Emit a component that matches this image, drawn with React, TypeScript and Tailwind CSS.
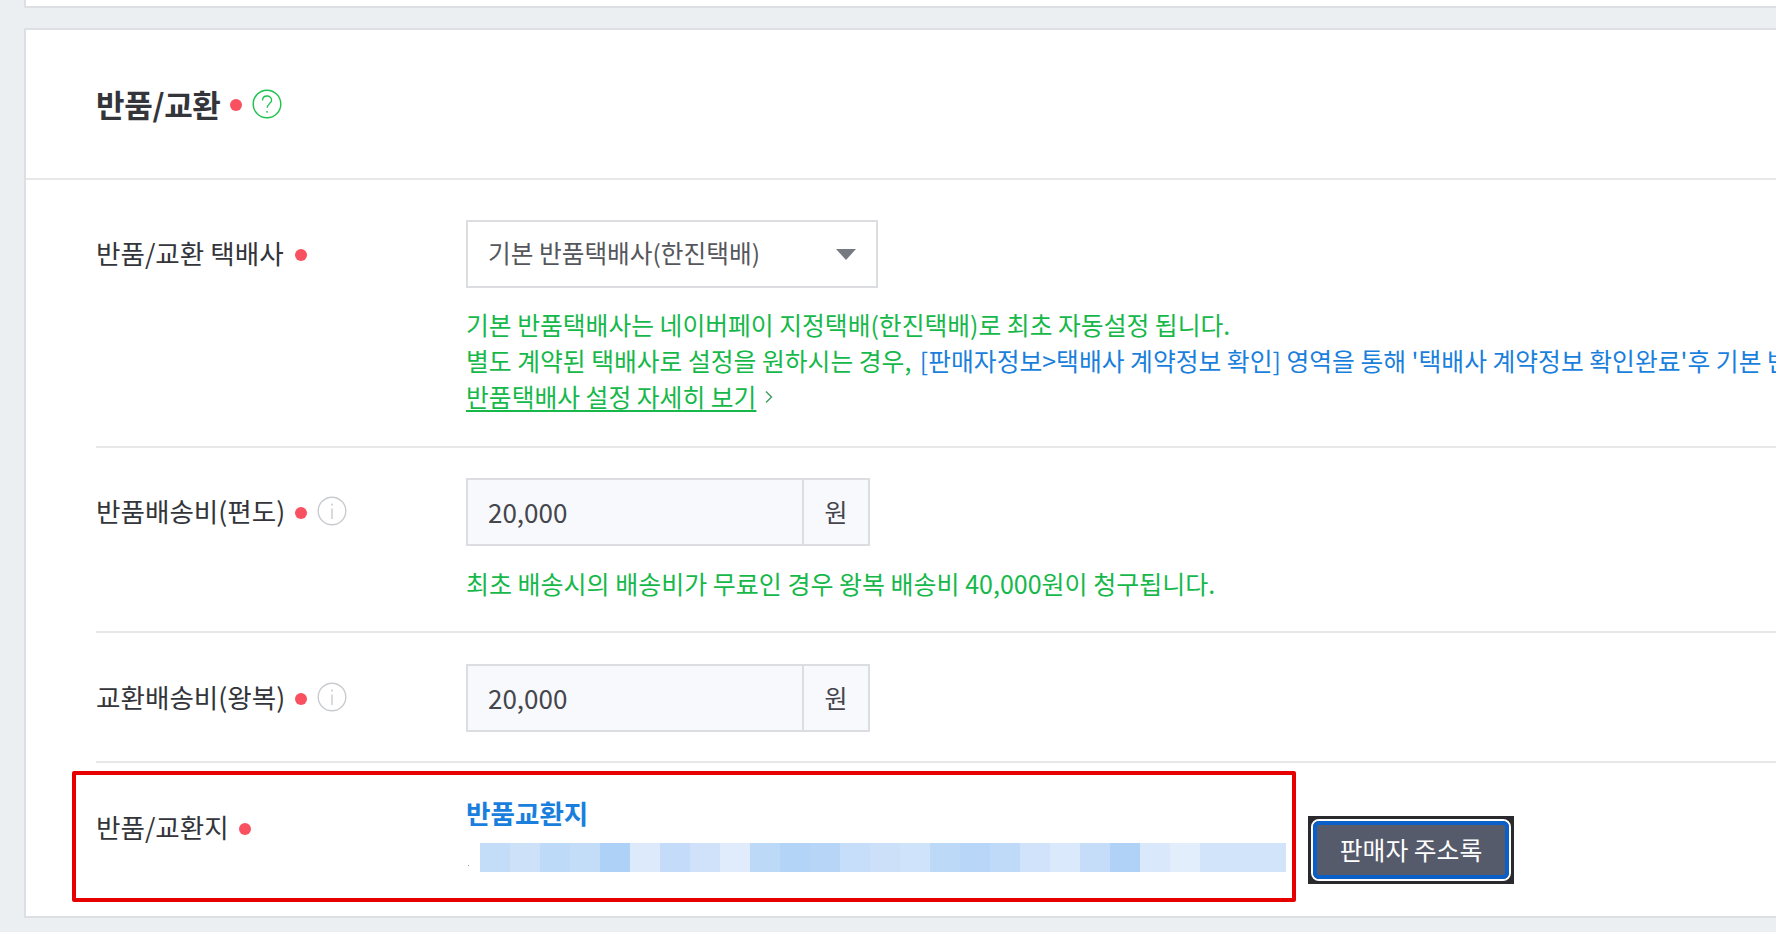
const blocks = [
  ['#c3dcf8', 30], ['#cde1f9', 30], ['#bddaf8', 30], ['#c3dcf8', 30], ['#aed1f7', 30], ['#dceafc', 30], ['#c4dcf9', 30], ['#d0e2fa', 30], ['#e0ecfc', 30],
  ['#bcd9f8', 30], ['#b4d4f7', 30], ['#b6d5f7', 30], ['#c6def9', 30], ['#cce0f9', 30], ['#cfe4fb', 30], ['#bcd9f8', 30], ['#b7d6f8', 30], ['#bfdaf8', 30],
  ['#d1e3fa', 30], ['#dbe9fc', 30], ['#c5ddf8', 30], ['#b0d2f7', 30], ['#dae8fb', 30], ['#e3eefc', 30], ['#d2e4fa', 86],
];

function Dot() {
  return <span className="inline-block w-[12px] h-[12px] mt-[4px] rounded-full bg-[#f9515f] shrink-0" />;
}

function Info() {
  return (
    <svg width="30" height="30" viewBox="0 0 30 30" fill="none" className="shrink-0">
      <circle cx="15" cy="15" r="13.8" stroke="#c9cbce" strokeWidth="1.4" />
      <path d="M15 12.5V23" stroke="#c9cbce" strokeWidth="1.4" />
      <circle cx="15" cy="8.5" r="1" fill="#c9cbce" />
    </svg>
  );
}

function Help() {
  return (
    <svg width="30" height="30" viewBox="0 0 30 30" fill="none" className="shrink-0">
      <circle cx="15" cy="15" r="13.8" stroke="#1ec14e" strokeWidth="1.4" />
      <path d="M10.5 11.5C10.5 8.8 12.5 7 15.1 7C17.7 7 19.6 8.8 19.6 11.2C19.6 14.4 15.2 15 15.2 18.8" stroke="#1ec14e" strokeWidth="1.3" />
      <circle cx="15" cy="22.8" r="0.9" fill="#1ec14e" />
    </svg>
  );
}

function PriceInput() {
  return (
    <div className="flex w-[404px] h-[68px] border-2 border-[#dcdde0] bg-[#f8f9fc] text-[#44464c]">
      <div className="flex-1 flex items-center pl-[20px] pb-[2px] text-[26px]">20,000</div>
      <div className="w-[66px] flex items-center justify-center border-l-2 border-[#dcdde0] text-[25px]">원</div>
    </div>
  );
}

export default function App() {
  return (
    <div className="relative h-[932px] overflow-hidden bg-[#ebeff2] pl-[24px] font-['Noto_Sans_CJK_KR','Noto_Sans',sans-serif] text-[#33353a]">
      <div className="h-[8px] bg-white border-l-2 border-b-2 border-[#dcdfe3]" />
      <div className="mt-[20px] h-[890px] w-[1752px] bg-white border-l-2 border-t-2 border-b-2 border-[#dcdfe3]">
        <div className="h-[150px] flex items-center pl-[70px] border-b-2 border-[#e6e7e9]">
          <h2 className="text-[31px] font-bold tracking-[-0.3px]">반품/교환</h2>
          <span className="ml-[9px] inline-block w-[12px] h-[12px] mt-[2px] rounded-full bg-[#f9515f] shrink-0" />
          <span className="ml-[10px]"><Help /></span>
        </div>
        <div className="ml-[70px]">
          <div className="h-[268px] flex border-b-2 border-[#e6e7e9] pt-[40px]">
            <div className="w-[370px] h-[68px] pb-[2px] flex items-center gap-[11px] text-[26.6px]">
              반품/교환 택배사 <Dot />
            </div>
            <div className="flex-1 min-w-0">
              <div className="w-[412px] h-[68px] flex items-center justify-between pl-[20px] pr-[20px] border-2 border-[#dcdde0] text-[24.7px] text-[#55575c]">
                <span className="mb-[2px]">기본 반품택배사(한진택배)</span>
                <span className="w-0 h-0 border-x-[10px] border-x-transparent border-t-[11px] border-t-[#777980]" />
              </div>
              <div className="mt-[18px] text-[24.8px] leading-[36px] text-[#16b84a] whitespace-nowrap">
                <p>기본 반품택배사는 네이버페이 지정택배(한진택배)로 최초 자동설정 됩니다.</p>
                <p>별도 계약된 택배사로 설정을 원하시는 경우, <span className="ml-[3px] text-[#1a7fdc]">[판매자정보&gt;택배사 계약정보 확인] 영역을 통해 '택배사 계약정보 확인완료'후 기본 반품택배사로 설정이 가능합니다.</span></p>
                <p className="flex items-center">
                  <a className="underline decoration-2 underline-offset-[3px]">반품택배사 설정 자세히 보기</a>
                  <svg width="8" height="14" viewBox="0 0 8 14" fill="none" className="ml-[9px] mt-[2px]">
                    <path d="M1 1.5L6.5 7L1 12.5" stroke="#3f9a62" strokeWidth="1.4" />
                  </svg>
                </p>
              </div>
            </div>
          </div>
          <div className="h-[185px] flex border-b-2 border-[#e6e7e9] pt-[30px]">
            <div className="w-[370px] h-[68px] pb-[2px] flex items-center gap-[10px] text-[26.6px]">
              반품배송비(편도) <Dot /> <Info />
            </div>
            <div>
              <PriceInput />
              <p className="mt-[19px] text-[25px] leading-[36px] text-[#16b84a] whitespace-nowrap">최초 배송시의 배송비가 무료인 경우 왕복 배송비 40,000원이 청구됩니다.</p>
            </div>
          </div>
          <div className="h-[130px] flex border-b-2 border-[#e6e7e9] pt-[31px]">
            <div className="w-[370px] h-[68px] pb-[2px] flex items-center gap-[10px] text-[26.6px]">
              교환배송비(왕복) <Dot /> <Info />
            </div>
            <PriceInput />
          </div>
          <div className="h-[153px] flex items-start">
            <div className="w-[370px] h-[36px] mt-[46px] flex items-center gap-[10px] text-[26.6px]">
              반품/교환지 <Dot />
            </div>
            <div className="w-[820px] mt-[32px]">
              <p className="text-[26.6px] leading-[36px] font-bold text-[#1a7fdc]">반품교환지</p>
              <div className="mt-[12px] flex items-end h-[29px]">
                <span className="w-[1px] h-[1px] ml-[2px] mb-[6px] bg-[#9a9a9a] mr-[11px]" />
                <div className="flex h-full">
                  {blocks.map(([color, width], i) => (
                    <div key={i} style={{ backgroundColor: color as string, width: width as number }} />
                  ))}
                </div>
              </div>
            </div>
            <button className="ml-[22px] mt-[53px] w-[206px] h-[68px] border-[3px] border-[#2a2a2e] bg-[#2a2a2e]">
              <span className="block w-full h-full rounded-[8px] border-2 border-white">
                <span className="flex items-center justify-center w-full h-full rounded-[6px] border-[4px] border-[#0a60c8] bg-[#555b6b] text-white text-[24.8px]">판매자 주소록</span>
              </span>
            </button>
          </div>
        </div>
      </div>
      <div className="absolute left-[72px] top-[771px] w-[1224px] h-[131px] border-[4px] border-[#e60000] rounded-[2px]" />
    </div>
  );
}
